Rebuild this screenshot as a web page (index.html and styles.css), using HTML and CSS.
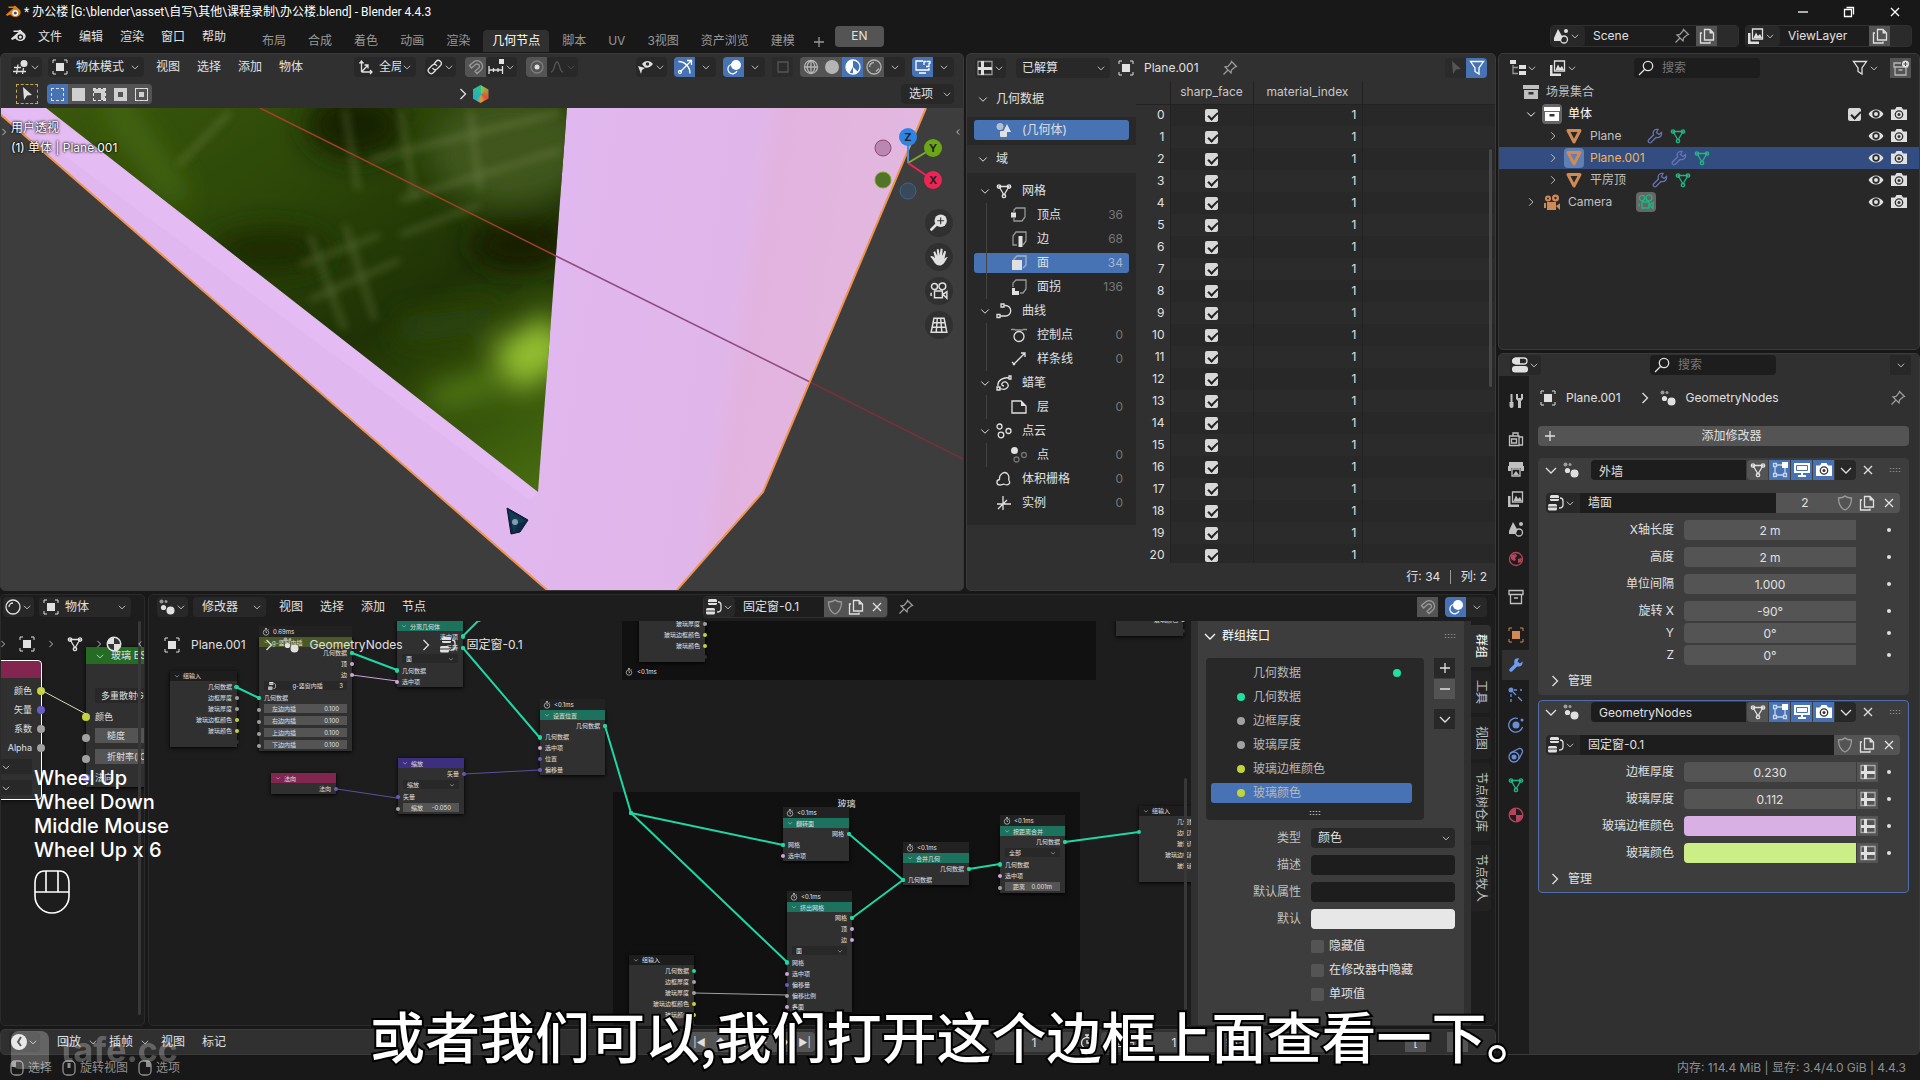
FILE: index.html
```
<!DOCTYPE html>
<html lang="zh-CN">
<head>
  <link rel="icon" href="data:,">
  <meta charset="UTF-8">
  <meta name="viewport" content="width=device-width, initial-scale=1.0">
  <title>办公楼.blend - Blender 4.4.3</title>
  <link rel="stylesheet" href="styles.css">
</head>
<body>
  <!-- icon sprite -->
  <svg class="sprite" aria-hidden="true">
    <defs>
      <g id="tri"><path d="M3 3.5h10L8 12z"/><circle cx="3" cy="3.5" r="1.7"/><circle cx="13" cy="3.5" r="1.7"/><circle cx="8" cy="13" r="1.7"/></g>
    </defs>
    <symbol id="down" viewBox="0 0 16 16"><path class="ln" d="M3 6l5 5 5-5"/></symbol>
    <symbol id="right" viewBox="0 0 16 16"><path class="ln" d="M5.500 3l5 5-5 5"/></symbol>
    <symbol id="left" viewBox="0 0 16 16"><path class="ln" d="M10 4L6 8l4 4"/></symbol>
    <symbol id="plus" viewBox="0 0 16 16"><path class="ln" d="M8 3v10M3 8h10"/></symbol>
    <symbol id="minus" viewBox="0 0 16 16"><path class="ln" d="M3 8h10"/></symbol>
    <symbol id="close" viewBox="0 0 16 16"><path class="ln" d="M4 4l8 8M12 4l-8 8"/></symbol>
    <symbol id="restore" viewBox="0 0 16 16"><path class="ln" d="M3.500 5.500h7v7h-7zM5.500 3.500h7v7"/></symbol>
    <symbol id="logo" viewBox="0 0 16 16"><path d="M1 10.500L8.500 4H3.500V2.500h5L10 1.500l5 4.500a5 4.500 0 1 1-9.500 4.500L2 12z"/><circle cx="10.300" cy="9" r="2.800" fill="#181818"/><circle cx="10.300" cy="9" r="1.500"/></symbol>
    <symbol id="applogo" viewBox="0 0 16 16"><path fill="#e87d0d" d="M1 10.500L8.500 4H3.500V2.500h5L10 1.500l5 4.500a5 4.500 0 1 1-9.500 4.500L2 12z"/><circle cx="10.300" cy="9" r="3" fill="#fff"/><circle cx="10.300" cy="9" r="1.600" fill="#265787"/></symbol>
    <symbol id="view3d" viewBox="0 0 16 16"><circle cx="11" cy="4.500" r="3.500"/><path class="ln" d="M1 8.500h7M0 12.500h13M5 5.500L3.500 15M10.500 9l-1 6"/></symbol>
    <symbol id="object" viewBox="0 0 16 16"><rect x="4" y="4" width="8" height="8"/><path class="ln thin" d="M1 4V1h3M12 1h3v3M15 12v3h-3M4 15H1v-3"/></symbol>
    <symbol id="orient" viewBox="0 0 16 16"><path class="ln" d="M3.500 13V3M1.500 4.500l2-2.500 2 2.500M3.500 13H14M12 11l2 2-2 2M3.500 13L10 6M6.500 6H10v3.500"/></symbol>
    <symbol id="pivot" viewBox="0 0 16 16"><path class="ln" d="M7 5l2-2.500a3 3 0 0 1 4.500 4L10 10a3 3 0 0 1-4.500-1M9 11l-2.500 2.500a3 3 0 0 1-4.500-4L5.500 6A3 3 0 0 1 10 7"/></symbol>
    <symbol id="magnet" viewBox="0 0 16 16"><path class="ln" d="M1.500 6.500L5 3.500a5.500 5.500 0 1 1 7.500 8L9 14.500 7 12.300l3.700-3.200a2.300 2.300 0 0 0-3.200-3.500L3.500 9z"/></symbol>
    <symbol id="increment" viewBox="0 0 16 16"><path class="ln" d="M1 7v8M5.500 9v4M10 9v4M14.500 7v8M1 11h14"/><rect x="11" y="0" width="5" height="5"/></symbol>
    <symbol id="prop" viewBox="0 0 16 16"><circle class="ln" cx="8" cy="8" r="6" opacity=".3"/><circle cx="8" cy="8" r="2.500"/></symbol>
    <symbol id="falloff" viewBox="0 0 16 16"><path class="ln" d="M2 13c4 0 3-10 6-10s2 10 6 10"/></symbol>
    <symbol id="select-eye" viewBox="0 0 16 16"><path d="M4 5c3-4 8-4 11 0-3 4-6 4-8 3.500zM0 7l7 2-3 2-1 4z"/><circle cx="9.500" cy="5" r="1.800" fill="#303030"/></symbol>
    <symbol id="gizmo" viewBox="0 0 16 16"><path class="ln" d="M1.500 2.500C8 2.500 13 8 13 14.500M3 13L14 2M10 1.500h4.500V6"/><circle class="ln" cx="3" cy="13" r="1.500"/></symbol>
    <symbol id="overlay" viewBox="0 0 16 16"><circle cx="10" cy="6" r="5"/><path class="ln" d="M5 5.500a4.800 4.800 0 1 0 6 6.500"/></symbol>
    <symbol id="xray" viewBox="0 0 16 16"><path class="ln" d="M3 3h10v10H3z"/></symbol>
    <symbol id="wire" viewBox="0 0 16 16"><circle class="ln" cx="8" cy="8" r="6.500"/><path class="ln" d="M1.500 8h13M8 1.500v13M8 1.500c-5 3-5 10 0 13M8 1.500c5 3 5 10 0 13"/></symbol>
    <symbol id="solid" viewBox="0 0 16 16"><circle cx="8" cy="8" r="7"/></symbol>
    <symbol id="matprev" viewBox="0 0 16 16"><circle class="ln" cx="8" cy="8" r="7"/><path d="M8 8V1A7 7 0 0 0 1 8a7 7 0 0 0 3.500 6zM8 8l5 5a7 7 0 0 1-5 2z"/></symbol>
    <symbol id="rendered" viewBox="0 0 16 16"><circle class="ln" cx="8" cy="8" r="7"/><path class="ln" d="M3.500 8A5 5 0 0 1 8 3.500M10 12.500l3-3"/></symbol>
    <symbol id="screenlink" viewBox="0 0 16 16"><path class="ln" d="M8 2H1v9h13V9M4 14h7M9 6V2.500h2.500M14 4v3.500h-3M12 2.500h3V5"/></symbol>
    <symbol id="sheet" viewBox="0 0 16 16"><path class="ln" d="M1 1.500h14v13H1z" opacity=".6"/><path d="M4 1h3v14H4zM1 7h14v3H1z"/></symbol>
    <symbol id="pin" viewBox="0 0 16 16"><path class="ln" d="M9.500 1.500l5 5-1.500.5-3.500 3-.5 3L3 7l3-.5 3-3.500zM6 10l-4.500 4.500"/></symbol>
    <symbol id="arrow" viewBox="0 0 16 16"><path d="M4 1l9 8-5 .5L5 14z"/></symbol>
    <symbol id="funnel" viewBox="0 0 16 16"><path class="ln" d="M1.500 1.500h13L10 8v6l-4-2.500V8z"/></symbol>
    <symbol id="geo" viewBox="0 0 16 16"><path d="M11 2l4 8H7z"/><rect x="4" y="9" width="7" height="6" rx="1"/><circle cx="4" cy="4.500" r="3.500" opacity=".7"/></symbol>
    <symbol id="mesh" viewBox="0 0 16 16"><use href="#tri" class="ln"/></symbol>
    <symbol id="vertex" viewBox="0 0 16 16"><path class="ln" d="M3 5V3l2-2h9v9l-3 4H3v-3" opacity=".6"/><rect x="0" y="5.500" width="5" height="5"/></symbol>
    <symbol id="edge" viewBox="0 0 16 16"><path class="ln" d="M6 14H2V5l3-4h10v9l-3 4" opacity=".6"/><rect x="7.500" y="5" width="4" height="11"/></symbol>
    <symbol id="face" viewBox="0 0 16 16"><path class="ln" d="M3 5V4l3-3h9v9l-3 3" opacity=".6"/><rect x="1" y="5" width="10" height="10"/></symbol>
    <symbol id="corner" viewBox="0 0 16 16"><path class="ln" d="M2 8V4l3-3h10v9l-3 4H9" opacity=".6"/><path d="M1 9h3v3h4v4H1z"/></symbol>
    <symbol id="curve" viewBox="0 0 16 16"><path class="ln" d="M8 2.500h1.500a5 5 0 0 1 0 10.500H4M5 1h3v3H5zM1 11.500h3v3H1z"/></symbol>
    <symbol id="control" viewBox="0 0 16 16"><circle class="ln" cx="8" cy="9.500" r="5"/><path class="ln" d="M0 2.500h4M12 2.500h4M4 3h8" opacity=".6"/></symbol>
    <symbol id="spline" viewBox="0 0 16 16"><path class="ln" d="M2 14L14 2M10 2h4v4M1 11l3 3"/></symbol>
    <symbol id="gpencil" viewBox="0 0 16 16"><path class="ln" d="M2 11c-1-6 6-9 11-8M3 13c8 4 12-3 7-6-4-1-6 4-2 4M13 1h2v3h-2zM1 12h3v3H1z"/></symbol>
    <symbol id="layer" viewBox="0 0 16 16"><path class="ln" d="M1 2h9l5 5v7H1z"/><path d="M10 2l5 5h-5z"/></symbol>
    <symbol id="cloud" viewBox="0 0 16 16"><circle class="ln" cx="3.500" cy="3.500" r="2.500"/><circle class="ln" cx="5" cy="12" r="2.800"/><circle class="ln" cx="12.500" cy="8" r="2.500"/></symbol>
    <symbol id="point" viewBox="0 0 16 16"><circle cx="3.500" cy="3.500" r="3.500"/><g opacity=".4"><circle class="ln" cx="5.500" cy="12.500" r="2.500"/><circle class="ln" cx="13" cy="8" r="2.500"/></g></symbol>
    <symbol id="volume" viewBox="0 0 16 16"><path class="ln" d="M4 14C0 14 0 9 3.500 8.500 3 3 9-1 12 3.500c2 3 0 4 1 6 2 3-1 5-4 4-2-1-3 .5-5 .5z"/></symbol>
    <symbol id="instance" viewBox="0 0 16 16"><path class="ln" d="M7 1v14M1 9h14M2 14l9-9"/></symbol>
    <symbol id="outliner" viewBox="0 0 16 16"><rect x="0" y="0" width="6" height="4"/><rect x="9" y="5" width="7" height="4"/><rect x="9" y="11" width="7" height="4"/><path class="ln" d="M3 5v8.500h5M3 7.500h5" opacity=".6"/></symbol>
    <symbol id="image" viewBox="0 0 16 16"><path class="ln" d="M4.500 1h10v10h-10z"/><path d="M5.500 10L8 4.500 10 8l2-2 2 4zM0 5h2.500v8.500H11V16H0z"/></symbol>
    <symbol id="search" viewBox="0 0 16 16"><circle class="ln" cx="10" cy="6" r="4.700"/><path class="ln" d="M6.500 9.500L1 15"/></symbol>
    <symbol id="newcol" viewBox="0 0 16 16"><path class="ln" d="M8 3H1v4h14M2 7v8h11V8M5.500 10h4" opacity=".7"/><circle cx="12.500" cy="4" r="3.500"/><path d="M12.500 2v4M10.500 4h4" stroke="#545454"/></symbol>
    <symbol id="collection" viewBox="0 0 16 16"><path d="M0 1h16v4H0zM1 6h14v9H1z"/><path d="M5.500 8h5v2.500h-5z" fill="#333"/></symbol>
    <symbol id="archive" viewBox="0 0 16 16"><path class="ln" d="M1 1.500h14v4H1zM2.500 5.500h11v9h-11zM6 9h4"/></symbol>
    <symbol id="tri-obj" viewBox="0 0 16 16"><path d="M2 2.500h12L8 14z" fill="none" stroke="currentColor" stroke-width="3" stroke-linejoin="round"/></symbol>
    <symbol id="wrench" viewBox="0 0 16 16"><path class="ln" d="M14.500 4.500L12 6.500l-2.500-2 1.500-3C7 .5 5.500 4 6.500 7L1.500 12c-1 2 1 3.500 2.500 2.500L9 9.500c4 .5 6-1.500 5.500-5z"/></symbol>
    <symbol id="wrench-fill" viewBox="0 0 16 16"><path d="M14.500 4.500L12 6.500l-2.500-2 1.500-3C7 .5 5.500 4 6.500 7L1.500 12c-1 2 1 3.500 2.500 2.500L9 9.500c4 .5 6-1.500 5.500-5z"/></symbol>
    <symbol id="eye" viewBox="0 0 16 16"><path d="M.5 8C4 2 12 2 15.500 8 12 14 4 14 .5 8z"/><circle cx="8" cy="8" r="3.700" fill="#282828"/><circle cx="8" cy="8" r="2"/></symbol>
    <symbol id="camera" viewBox="0 0 16 16"><path d="M0 3.500h4L5.500 1h5L12 3.500h4V14H0z"/><circle cx="8" cy="8.500" r="3.700" fill="none" stroke="#333" stroke-width="1.300"/><circle cx="8" cy="8.500" r="1.500" fill="#333"/></symbol>
    <symbol id="movie" viewBox="0 0 16 16"><circle cx="4" cy="4" r="2.700" class="ln"/><circle cx="11" cy="3.800" r="3" class="ln"/><path class="ln" d="M4 8h7v6H4zM11.500 11l3.500-2.500v6zM1 9.500v3"/></symbol>
    <symbol id="movie-fill" viewBox="0 0 16 16"><circle cx="4" cy="4.500" r="3"/><circle cx="11.500" cy="4" r="3.500"/><path d="M3 8h9v8H3zM12 12l4-2.500V16zM0 9h2v5H0z"/><circle cx="11.500" cy="4" r="1.200" fill="#282828"/><circle cx="4" cy="4.500" r="1" fill="#282828"/></symbol>
    <symbol id="scene" viewBox="0 0 16 16"><path d="M5 1l4.500 8-2 4H1V10z"/><circle cx="13" cy="3" r="2"/><circle class="ln" cx="11" cy="11.500" r="3.500" fill="#222"/></symbol>
    <symbol id="copy" viewBox="0 0 16 16"><path class="ln" d="M5.500 1.500H11l3.500 3.500v7h-9zM3 5H1.500v10H11v-1.500"/><path d="M10.500 1.500v4h4z"/></symbol>
    <symbol id="shield" viewBox="0 0 16 16"><path class="ln" d="M1.500 3C4 3 6.500 2.500 8 1c1.500 1.500 4 2 6.500 2 0 6-2 10-6.500 12C3.500 13 1.500 9 1.500 3z"/></symbol>
    <symbol id="tree" viewBox="0 0 16 16"><rect x="2" y="0" width="9" height="6" rx="1.500"/><rect x="0" y="9" width="9" height="6.500" rx="1.500"/><path class="ln" d="M12 3c2 0 3 1 3 3v4c0 2-1 3-4 3"/><path d="M2 3.500h9M0 12h9" stroke="#333"/></symbol>
    <symbol id="dots" viewBox="0 0 16 16"><circle cx="11.500" cy="11.500" r="4"/><circle cx="4.500" cy="8.500" r="2.600"/><circle cx="2.500" cy="2.500" r="2" opacity=".6"/><circle cx="7" cy="2.500" r="1.500" opacity=".6"/></symbol>
    <symbol id="properties" viewBox="0 0 16 16"><rect x="1" y="1" width="14" height="6" rx="3" class="ln"/><path d="M3 1h5v6H3a3 3 0 0 1 0-6z"/><rect x="0" y="9" width="16" height="6.500" rx="3"/></symbol>
    <symbol id="tool" viewBox="0 0 16 16"><path d="M2.500 1h2v8h1v4a2 2 0 0 1-4 0V9h1zM8 1h2v4h3V1h2v5l-2 2v7h-3V8L8 6z"/></symbol>
    <symbol id="render" viewBox="0 0 16 16"><path class="ln" d="M1.500 5H11v9.500H1.500zM11 6h3.500v8H11M5 5V2h5v3M3.500 8h5v4h-5z"/></symbol>
    <symbol id="output" viewBox="0 0 16 16"><path d="M1 1h14v4H1zM0 5h16v5h-3V7H3v3H0z"/><path class="ln" d="M4 8h8v7H4z"/><path d="M5 14l3-4 3 4z"/></symbol>
    <symbol id="world" viewBox="0 0 16 16"><circle class="ln" cx="8" cy="8" r="6.500"/><path d="M3 4l5-1 1 2-2 2 1 2-2 1-3-2zM10 8l4-1-1 4-3 1zM12 3l3-2"/></symbol>
    <symbol id="particles" viewBox="0 0 16 16"><circle cx="3" cy="3" r="2.500"/><path class="ln" d="M6 3h3M12 3h2M5 5l3 3M10 10l4 4M3 7v3M3 12v3"/></symbol>
    <symbol id="physics" viewBox="0 0 16 16"><circle cx="8" cy="8" r="3.500"/><path class="ln" d="M10 1.500A7 7 0 1 0 14.500 10"/><circle cx="14" cy="3" r="1.500"/></symbol>
    <symbol id="constraint" viewBox="0 0 16 16"><circle class="ln" cx="6" cy="10" r="5"/><circle cx="6" cy="10" r="2.500"/><path class="ln" d="M2 6L11 1.500a3 3 0 0 1 3.500 3.500L11 12"/></symbol>
    <symbol id="material" viewBox="0 0 16 16"><circle class="ln" cx="8" cy="8" r="6.800"/><path d="M8 8V1.500A6.500 6.500 0 0 0 1.500 8zM8 8v6.500A6.500 6.500 0 0 0 14.500 8z"/></symbol>
    <symbol id="material-w" viewBox="0 0 16 16"><circle cx="8" cy="8" r="7.500"/><path d="M8 8V2a6 6 0 0 1 6 6zM8 8v6a6 6 0 0 1-6-6z" fill="#333"/></symbol>
    <symbol id="editmode" viewBox="0 0 16 16"><path class="ln" d="M3 5v6M5 13h6M13 6v5M5 3h5M1.500 1.500h3v3h-3zM1.500 11.500h3v3h-3zM11.500 11.500h3v3h-3z" opacity=".7"/><rect x="10" y="0" width="6" height="6"/></symbol>
    <symbol id="display" viewBox="0 0 16 16"><path d="M0 1h16v10H0zM4 13h8v2H4zM7 11h2v3H7z"/><path class="inner" d="M2.500 3.500h11v5h-11z"/></symbol>
    <symbol id="clock" viewBox="0 0 16 16"><circle cx="8" cy="8" r="8"/><path class="inner dark-line" d="M10 3L7 8l3 4"/></symbol>
    <symbol id="stopwatch" viewBox="0 0 16 16"><circle class="ln" cx="8" cy="9" r="5.500"/><path class="ln" d="M6 1h4M8 1v3M8 6v3h2M13 3l1 1"/></symbol>
    <symbol id="sphere" viewBox="0 0 16 16"><circle class="ln" cx="8" cy="8" r="7"/><path class="ln" d="M4 8a4 4 0 0 1 4-4"/></symbol>
    <symbol id="grip" viewBox="0 0 16 16"><path d="M1 6h2M5 6h2M9 6h2M13 6h2M1 10h2M5 10h2M9 10h2M13 10h2" stroke="currentColor" stroke-width="1.500"/></symbol>
    <symbol id="mouse-l" viewBox="0 0 16 16"><rect class="ln" x="2" y="1" width="12" height="14" rx="4"/><path d="M6 1h1v6H2V5a4 4 0 0 1 4-4z"/></symbol>
    <symbol id="mouse-m" viewBox="0 0 16 16"><rect class="ln" x="2" y="1" width="12" height="14" rx="4"/><path d="M6.500 3h3v5h-3z"/></symbol>
    <symbol id="mouse-r" viewBox="0 0 16 16"><rect class="ln" x="2" y="1" width="12" height="14" rx="4"/><path d="M9 1h1a4 4 0 0 1 4 4v2H9z"/></symbol>
    <symbol id="zoomin" viewBox="0 0 16 16"><circle cx="9.500" cy="6" r="5.500"/><path d="M6 9l-5.500 5.500" stroke="currentColor" stroke-width="2.500"/><path d="M9.500 3v6M6.500 6h6" stroke="#333"/></symbol>
    <symbol id="hand" viewBox="0 0 16 16"><path d="M4.500 9L3 3.500l1.500-.7L6.500 7 6 1h1.800l.7 5.500L9.500.5l1.700.3L10.800 7l2-4.500 1.500.6-1.500 6.500c1-1 2-2 3-1.600-2 3-3.300 7-6.500 7.500-4 .5-5.300-2.500-6.800-5L.3 7.500C1.500 6.500 3 7.500 4.500 9z"/></symbol>
    <symbol id="grid" viewBox="0 0 16 16"><path class="ln" d="M3.500 2h9L15 14.500H1zM2.500 6h11M2 10h12M6.500 2L5.500 14.500M9.500 2l1 12.500"/></symbol>
  </svg>

  <header class="titlebar">
    <svg class="icon"><use href="#applogo"/></svg>
    <span class="title-text">* 办公楼 [G:\blender\asset\自写\其他\课程录制\办公楼.blend] - Blender 4.4.3</span>
    <div class="window-buttons">
      <button aria-label="最小化"><svg class="icon"><use href="#minus"/></svg></button>
      <button aria-label="还原"><svg class="icon"><use href="#restore"/></svg></button>
      <button aria-label="关闭"><svg class="icon"><use href="#close"/></svg></button>
    </div>
  </header>

  <div class="topbar">
    <button class="logo-btn" aria-label="Blender"><svg class="icon"><use href="#logo"/></svg></button>
    <nav class="menus">
      <button>文件</button><button>编辑</button><button>渲染</button><button>窗口</button><button>帮助</button>
    </nav>
    <nav class="tabs">
      <button>布局</button><button>合成</button><button>着色</button><button>动画</button><button>渲染</button><button class="active">几何节点</button><button>脚本</button><button>UV</button><button>3视图</button><button>资产浏览</button><button>建模</button>
      <button class="add-tab" aria-label="添加工作区"><svg class="icon"><use href="#plus"/></svg></button>
    </nav>
    <button class="lang">EN</button>
    <div class="id-block scene-block">
      <button class="drop" aria-label="浏览场景"><svg class="icon"><use href="#scene"/></svg><svg class="chev"><use href="#down"/></svg></button>
      <input type="text" value="Scene" aria-label="场景">
      <svg class="icon dim"><use href="#pin"/></svg>
      <button class="sq" aria-label="新建场景"><svg class="icon"><use href="#copy"/></svg></button>
      <button class="sq off" aria-label="删除场景"></button>
    </div>
    <div class="id-block layer-block">
      <button class="drop" aria-label="浏览视图层"><svg class="icon"><use href="#image"/></svg><svg class="chev"><use href="#down"/></svg></button>
      <input type="text" value="ViewLayer" aria-label="视图层">
      <button class="sq" aria-label="新建视图层"><svg class="icon"><use href="#copy"/></svg></button>
      <button class="sq off" aria-label="删除视图层"></button>
    </div>
  </div>

  <main class="workspace">
    <div class="left-side">
      <div class="top-areas">
        <!-- 3D viewport -->
        <section class="area viewport">
          <div class="header">
            <button class="drop" aria-label="编辑器类型"><svg class="icon"><use href="#view3d"/></svg><svg class="chev"><use href="#down"/></svg></button>
            <div class="select mode-select"><svg class="icon"><use href="#object"/></svg><select aria-label="模式"><option>物体模式</option></select><svg class="chev"><use href="#down"/></svg></div>
            <nav class="menus"><button>视图</button><button>选择</button><button>添加</button><button>物体</button></nav>
            <div class="cluster auto loose">
              <div class="select orient-select"><svg class="icon"><use href="#orient"/></svg><select aria-label="变换坐标系"><option>全局</option></select><svg class="chev"><use href="#down"/></svg></div>
              <button class="drop" aria-label="轴心点"><svg class="icon"><use href="#pivot"/></svg><svg class="chev"><use href="#down"/></svg></button>
              <div class="joined">
                <button class="sq" aria-label="吸附"><svg class="icon dim"><use href="#magnet"/></svg></button>
                <button class="drop" aria-label="吸附到"><svg class="icon"><use href="#increment"/></svg><svg class="chev"><use href="#down"/></svg></button>
              </div>
              <div class="joined">
                <button class="sq" aria-label="衰减编辑"><svg class="icon"><use href="#prop"/></svg></button>
                <button class="drop faint" aria-label="衰减类型"><svg class="icon"><use href="#falloff"/></svg><svg class="chev"><use href="#down"/></svg></button>
              </div>
            </div>
            <div class="cluster auto">
              <button class="drop" aria-label="可选性"><svg class="icon"><use href="#select-eye"/></svg><svg class="chev"><use href="#down"/></svg></button>
              <div class="joined">
                <button class="sq on" aria-label="Gizmo"><svg class="icon"><use href="#gizmo"/></svg></button>
                <button class="sq dark" aria-label="Gizmo 选项"><svg class="chev"><use href="#down"/></svg></button>
              </div>
              <div class="joined">
                <button class="sq on" aria-label="叠加层"><svg class="icon"><use href="#overlay"/></svg></button>
                <button class="sq dark" aria-label="叠加层选项"><svg class="chev"><use href="#down"/></svg></button>
              </div>
              <button class="sq off faint" aria-label="透视模式"><svg class="icon"><use href="#xray"/></svg></button>
              <div class="joined">
                <button class="sq" aria-label="线框"><svg class="icon light"><use href="#wire"/></svg></button>
                <button class="sq" aria-label="实体"><svg class="icon light"><use href="#solid"/></svg></button>
                <button class="sq on" aria-label="材质预览"><svg class="icon"><use href="#matprev"/></svg></button>
                <button class="sq" aria-label="渲染"><svg class="icon light"><use href="#rendered"/></svg></button>
                <button class="sq dark" aria-label="着色选项"><svg class="chev"><use href="#down"/></svg></button>
              </div>
              <div class="joined">
                <button class="sq on" aria-label="屏幕"><svg class="icon"><use href="#screenlink"/></svg></button>
                <button class="sq dark" aria-label="屏幕选项"><svg class="chev"><use href="#down"/></svg></button>
              </div>
            </div>
          </div>
          <div class="header tool-header">
            <div class="tool-left">
              <button class="tool-btn" aria-label="选择工具"><svg class="icon"><use href="#arrow"/></svg></button>
              <div class="joined">
                <button class="sq on" aria-label="设置"><i class="sel-box"></i></button>
                <button class="sq" aria-label="扩展"><i class="sel-box extend"></i></button>
                <button class="sq" aria-label="减去"><i class="sel-box subtract"></i></button>
                <button class="sq" aria-label="反转"><i class="sel-box invert"></i></button>
                <button class="sq" aria-label="相交"><i class="sel-box intersect"></i></button>
              </div>
            </div>
            <svg class="icon"><use href="#right"/></svg><i class="hexagon"></i>
            <div class="tool-right"><button class="options">选项 <svg class="chev"><use href="#down"/></svg></button></div>
          </div>
          <div class="scene3d">
            <svg class="scene-svg" viewBox="1 108 962 482" preserveAspectRatio="xMidYMid slice">
              <defs>
                <linearGradient id="wall" gradientUnits="userSpaceOnUse" x1="560" y1="300" x2="880" y2="350">
                  <stop offset="0" stop-color="#e0b7ee"/><stop offset=".52" stop-color="#e0b6ea"/><stop offset=".6" stop-color="#e2b3df"/><stop offset="1" stop-color="#e2b8df"/>
                </linearGradient>
                <linearGradient id="leaf" x1="0" y1="0" x2="1" y2="1">
                  <stop offset="0" stop-color="#3c5a0c"/><stop offset=".35" stop-color="#2c4708"/><stop offset=".6" stop-color="#1f3205"/><stop offset="1" stop-color="#4f7812"/>
                </linearGradient>
                <clipPath id="pane"><path d="M46 108H567L538 492z"/></clipPath>
                <filter id="soft" x="-50%" y="-50%" width="200%" height="200%"><feGaussianBlur stdDeviation="14"/></filter>
                <filter id="soft2" x="-50%" y="-50%" width="200%" height="200%"><feGaussianBlur stdDeviation="4"/></filter>
              </defs>
              <rect x="0" y="100" width="970" height="500" fill="#3d3d3d"/>
              <path d="M0 100V114L547 590H677L763 492L929 100z" fill="url(#wall)"/>
              <path d="M0 108L46 108L538 492L530 500z" fill="#e4bcf3"/>
              <g clip-path="url(#pane)">
                <rect x="0" y="100" width="600" height="400" fill="url(#leaf)"/>
                <g filter="url(#soft)">
                  <ellipse cx="355" cy="125" rx="50" ry="35" fill="#142103"/>
                  <ellipse cx="270" cy="250" rx="60" ry="22" fill="#1a2a05"/>
                  <ellipse cx="520" cy="245" rx="50" ry="26" fill="#131f03"/>
                  <ellipse cx="510" cy="150" rx="80" ry="55" fill="#3f571b"/>
                  <path d="M505 372L560 335" stroke="#94c030" stroke-width="52"/>
                  <path d="M430 400L500 380" stroke="#577f18" stroke-width="22"/>
                  <path d="M400 330L490 320" stroke="#2c440a" stroke-width="26"/>
                  <path d="M110 100l70 100" stroke="#4c7016" stroke-width="18"/>
                </g>
                <g filter="url(#soft2)" stroke="#8a9a64" stroke-width="4" opacity=".45" fill="none">
                  <path d="M178 165L230 112M345 110L358 190M400 110L415 200M470 110L480 190M310 235L345 330M345 225L375 320M300 265L380 235M310 300L400 260M370 160L560 112M400 200L560 150M400 235L480 205"/>
                </g>
              </g>
              <path d="M260 108L556 256" stroke="#a3402c" stroke-width="1.500"/>
              <path d="M556 256L810 382" stroke="#8e4c82" stroke-width="1.500"/>
              <path d="M810 382L963 459" stroke="#7b2f3f" stroke-width="1.500"/>
              <path d="M0 114L547 590M677 590L763 492L926 108" fill="none" stroke="#ee9350" stroke-width="2"/>
              <path d="M507 508l4 26 9-2 8-12z" fill="#0c2a44" stroke="#0b1622"/>
              <path d="M508 510l18 11-8 3-4 9z" fill="#123a55"/><circle cx="515" cy="522" r="3" fill="#7fa0b0"/>
            </svg>
            <div class="view-info"><div>用户透视</div><div>(1) 单体 | Plane.001</div></div>
            <svg class="chev edge-left"><use href="#right"/></svg>
            <svg class="chev edge-right"><use href="#left"/></svg>
            <div class="nav">
              <svg class="axes" viewBox="0 0 80 80">
                <g stroke-width="2"><path d="M40 40V14" stroke="#4a90d0"/><path d="M40 40L65 25" stroke="#7bab35"/><path d="M40 40L65 57" stroke="#ee2455"/></g>
                <circle cx="15" cy="25" r="8" fill="#b987b2" stroke="#8b4a72"/><circle cx="15" cy="57" r="8" fill="#53732a" stroke="#78a724"/><circle cx="40" cy="68" r="8" fill="#38495c" stroke="#3d6287"/>
                <circle cx="40" cy="14" r="9" fill="#2f84e3"/><circle cx="65" cy="25" r="9" fill="#6ba617"/><circle cx="65" cy="57" r="9" fill="#ee2455"/>
                <text x="40" y="18">Z</text><text x="65" y="29">Y</text><text x="65" y="61">X</text>
              </svg>
              <button aria-label="缩放"><svg class="icon"><use href="#zoomin"/></svg></button>
              <button aria-label="平移"><svg class="icon"><use href="#hand"/></svg></button>
              <button aria-label="相机"><svg class="icon"><use href="#movie"/></svg></button>
              <button aria-label="透视"><svg class="icon"><use href="#grid"/></svg></button>
            </div>
          </div>
        </section>

        <!-- spreadsheet -->
        <section class="area spreadsheet">
          <div class="header">
            <button class="drop" aria-label="编辑器类型"><svg class="icon"><use href="#sheet"/></svg><svg class="chev"><use href="#down"/></svg></button>
            <div class="select eval-select"><select aria-label="求值状态"><option>已解算</option></select><svg class="chev"><use href="#down"/></svg></div>
            <div class="path"><svg class="icon"><use href="#object"/></svg><span>Plane.001</span></div>
            <svg class="icon dim sheet-pin"><use href="#pin"/></svg>
            <div class="joined push">
              <button class="sq off faint" aria-label="仅选中项"><svg class="icon"><use href="#arrow"/></svg></button>
              <button class="sq on" aria-label="过滤"><svg class="icon"><use href="#funnel"/></svg></button>
            </div>
          </div>
          <div class="sheet-body">
            <aside class="domains">
              <h3><svg class="chev"><use href="#down"/></svg>几何数据</h3>
              <div class="data-box"><button class="row selected"><svg class="icon"><use href="#geo"/></svg>(几何体)</button></div>
              <h3 class="short"><svg class="chev"><use href="#down"/></svg>域</h3>
              <ul class="tree" id="domainTree"></ul>
            </aside>
            <div class="table-wrap">
              <table>
                <thead><tr><th class="idx"></th><th class="sharp">sharp_face</th><th class="mat">material_index</th><th></th></tr></thead>
                <tbody id="sheetRows"></tbody>
              </table>
              <i class="scrollbar"></i>
            </div>
          </div>
          <footer>行: 34 &nbsp;<i></i>&nbsp; 列: 2</footer>
        </section>
      </div>

      <div class="bottom-areas">
        <!-- shader editor -->
        <section class="area nodes shader">
          <div class="header">
            <button class="drop" aria-label="编辑器类型"><svg class="icon"><use href="#sphere"/></svg><svg class="chev"><use href="#down"/></svg></button>
            <div class="select shader-select"><svg class="icon"><use href="#object"/></svg><select aria-label="着色器类型"><option>物体</option></select><svg class="chev"><use href="#down"/></svg></div>
          </div>
          <div class="canvas big" id="shaderCanvas">
            <div class="crumbs tight"><svg class="chev"><use href="#right"/></svg><svg class="icon"><use href="#object"/></svg><svg class="chev"><use href="#right"/></svg><svg class="icon"><use href="#mesh"/></svg><svg class="chev"><use href="#right"/></svg><svg class="icon last"><use href="#material-w"/></svg><svg class="chev"><use href="#left"/></svg></div>
          </div>
        </section>

        <!-- geometry nodes -->
        <section class="area nodes geometry">
          <div class="header">
            <button class="drop" aria-label="编辑器类型"><svg class="icon"><use href="#dots"/></svg><svg class="chev"><use href="#down"/></svg></button>
            <div class="select type-select"><select aria-label="节点树类型"><option>修改器</option></select><svg class="chev"><use href="#down"/></svg></div>
            <nav class="menus"><button>视图</button><button>选择</button><button>添加</button><button>节点</button></nav>
            <div class="id-block tree-block">
              <button class="drop" aria-label="浏览节点树"><svg class="icon"><use href="#tree"/></svg><svg class="chev"><use href="#down"/></svg></button>
              <input type="text" value="固定窗-0.1" aria-label="节点树">
              <button class="sq" aria-label="伪用户"><svg class="icon dim"><use href="#shield"/></svg></button>
              <button class="sq" aria-label="复制"><svg class="icon"><use href="#copy"/></svg></button>
              <button class="sq" aria-label="断开"><svg class="icon"><use href="#close"/></svg></button>
            </div>
            <svg class="icon dim tree-pin"><use href="#pin"/></svg>
            <div class="cluster push">
              <button class="sq" aria-label="吸附"><svg class="icon dim"><use href="#magnet"/></svg></button>
              <div class="joined"><button class="sq on" aria-label="叠加层"><svg class="icon"><use href="#overlay"/></svg></button><button class="sq dark" aria-label="叠加层选项"><svg class="chev"><use href="#down"/></svg></button></div>
            </div>
          </div>
          <div class="node-body">
            <div class="canvas" id="geoCanvas">
              <div class="crumbs"><svg class="icon"><use href="#object"/></svg><span>Plane.001</span><svg class="icon sep"><use href="#right"/></svg><svg class="icon"><use href="#dots"/></svg><span>GeometryNodes</span><svg class="icon sep"><use href="#right"/></svg><svg class="icon"><use href="#tree"/></svg><span>固定窗-0.1</span></div>
            </div>
            <aside class="sidebar">
              <div class="group-panel">
                <h3><svg class="icon"><use href="#down"/></svg>群组接口<svg class="icon grip"><use href="#grip"/></svg></h3>
                <div class="socket-list">
                  <ul>
                    <li><i></i>几何数据<i class="dot green out"></i></li>
                    <li><i class="dot green"></i>几何数据</li>
                    <li><i class="dot gray"></i>边框厚度</li>
                    <li><i class="dot gray"></i>玻璃厚度</li>
                    <li><i class="dot yellow"></i>玻璃边框颜色</li>
                    <li class="selected"><i class="dot yellow"></i>玻璃颜色</li>
                    <li class="resize"><svg class="icon"><use href="#grip"/></svg></li>
                  </ul>
                  <div class="list-buttons">
                    <button class="sq dark" aria-label="添加"><svg class="icon"><use href="#plus"/></svg></button>
                    <button class="sq" aria-label="移除"><svg class="icon"><use href="#minus"/></svg></button>
                    <button class="sq dark more" aria-label="更多"><svg class="icon"><use href="#down"/></svg></button>
                  </div>
                </div>
                <div class="form">
                  <label for="sockType">类型</label><div class="select"><select id="sockType"><option>颜色</option></select><svg class="chev"><use href="#down"/></svg></div>
                  <label for="sockDesc">描述</label><input type="text" id="sockDesc">
                  <label for="sockAttr">默认属性</label><input type="text" id="sockAttr">
                  <label for="sockDefault">默认</label><button id="sockDefault" class="swatch white"></button>
                </div>
                <div class="checks">
                  <label><input type="checkbox">隐藏值</label>
                  <label><input type="checkbox">在修改器中隐藏</label>
                  <label><input type="checkbox">单项值</label>
                </div>
              </div>
              <nav class="side-tabs"><button class="active">群组</button><button>工具</button><button>视图</button><button>节点树仓库</button><button>节点牧人</button></nav>
            </aside>
          </div>
        </section>
      </div>

      <!-- timeline -->
      <section class="area timeline">
        <button class="drop" aria-label="编辑器类型"><svg class="icon"><use href="#clock"/></svg><svg class="chev"><use href="#down"/></svg></button>
        <nav class="menus"><button>回放<svg class="chev"><use href="#down"/></svg></button><button>插帧<svg class="chev"><use href="#down"/></svg></button><button>视图</button><button>标记</button></nav>
        <div class="joined playback"><button class="sq">|◀</button><button class="sq">◆</button><button class="sq">◀</button><button class="sq">▶</button><button class="sq">◆</button><button class="sq">▶|</button></div>
        <div class="frames">
          <input type="text" value="1" aria-label="当前帧"><svg class="icon"><use href="#stopwatch"/></svg>
          <div class="joined"><label>起始<input type="text" value="1"></label><label>结束<input type="text" value="250"></label></div>
          <div class="brackets"><button class="sq">[</button><button class="sq">]</button></div>
        </div>
      </section>
    </div>

    <div class="right-side">
      <!-- outliner -->
      <section class="area outliner">
        <div class="header">
          <button class="drop" aria-label="编辑器类型"><svg class="icon"><use href="#outliner"/></svg><svg class="chev"><use href="#down"/></svg></button>
          <button class="drop" aria-label="显示模式"><svg class="icon"><use href="#image"/></svg><svg class="chev"><use href="#down"/></svg></button>
          <div class="search"><svg class="icon"><use href="#search"/></svg><input type="text" placeholder="搜索" aria-label="搜索"></div>
          <button class="drop" aria-label="过滤"><svg class="icon"><use href="#funnel"/></svg><svg class="chev"><use href="#down"/></svg></button>
          <button class="sq" aria-label="新建集合"><svg class="icon"><use href="#newcol"/></svg></button>
        </div>
        <ul class="objects">
          <li><span class="twist"></span><svg class="icon"><use href="#collection"/></svg><span class="name">场景集合</span></li>
          <li class="lvl1 bright"><svg class="icon twist"><use href="#down"/></svg><span class="boxed"><svg class="icon"><use href="#collection"/></svg></span><span class="name">单体</span><span class="toggles"><input type="checkbox" checked aria-label="启用"><svg class="icon"><use href="#eye"/></svg><svg class="icon"><use href="#camera"/></svg></span></li>
          <li class="lvl2"><svg class="icon twist"><use href="#right"/></svg><svg class="icon orange"><use href="#tri-obj"/></svg><span class="name">Plane</span><svg class="icon blue"><use href="#wrench"/></svg><svg class="icon green"><use href="#mesh"/></svg><span class="toggles"><svg class="icon"><use href="#eye"/></svg><svg class="icon"><use href="#camera"/></svg></span></li>
          <li class="lvl2 active"><svg class="icon twist"><use href="#right"/></svg><span class="boxed"><svg class="icon orange"><use href="#tri-obj"/></svg></span><span class="name">Plane.001</span><svg class="icon blue"><use href="#wrench"/></svg><svg class="icon green"><use href="#mesh"/></svg><span class="toggles"><svg class="icon"><use href="#eye"/></svg><svg class="icon"><use href="#camera"/></svg></span></li>
          <li class="lvl2"><svg class="icon twist"><use href="#right"/></svg><svg class="icon orange"><use href="#tri-obj"/></svg><span class="name">平房顶</span><svg class="icon blue"><use href="#wrench"/></svg><svg class="icon green"><use href="#mesh"/></svg><span class="toggles"><svg class="icon"><use href="#eye"/></svg><svg class="icon"><use href="#camera"/></svg></span></li>
          <li class="lvl1"><svg class="icon twist"><use href="#right"/></svg><svg class="icon orange"><use href="#movie-fill"/></svg><span class="name">Camera</span><span class="boxed"><svg class="icon green"><use href="#movie"/></svg></span><span class="toggles"><svg class="icon"><use href="#eye"/></svg><svg class="icon"><use href="#camera"/></svg></span></li>
        </ul>
      </section>

      <!-- properties -->
      <section class="area properties">
        <div class="header">
          <button class="drop" aria-label="编辑器类型"><svg class="icon"><use href="#properties"/></svg><svg class="chev"><use href="#down"/></svg></button>
          <div class="search"><svg class="icon"><use href="#search"/></svg><input type="text" placeholder="搜索" aria-label="搜索"></div>
          <button class="sq dark" aria-label="选项"><svg class="chev"><use href="#down"/></svg></button>
        </div>
        <div class="prop-body">
          <nav class="prop-tabs">
            <button aria-label="工具"><svg class="icon"><use href="#tool"/></svg></button>
            <button class="gap" aria-label="渲染"><svg class="icon"><use href="#render"/></svg></button>
            <button aria-label="输出"><svg class="icon"><use href="#output"/></svg></button>
            <button aria-label="视图层"><svg class="icon"><use href="#image"/></svg></button>
            <button aria-label="场景"><svg class="icon"><use href="#scene"/></svg></button>
            <button aria-label="世界"><svg class="icon red"><use href="#world"/></svg></button>
            <button class="gap" aria-label="集合"><svg class="icon"><use href="#archive"/></svg></button>
            <button class="gap" aria-label="物体"><svg class="icon orange"><use href="#object"/></svg></button>
            <button class="active" aria-label="修改器"><svg class="icon"><use href="#wrench-fill"/></svg></button>
            <button aria-label="粒子"><svg class="icon sky"><use href="#particles"/></svg></button>
            <button aria-label="物理"><svg class="icon sky"><use href="#physics"/></svg></button>
            <button aria-label="约束"><svg class="icon sky"><use href="#constraint"/></svg></button>
            <button aria-label="数据"><svg class="icon green"><use href="#mesh"/></svg></button>
            <button aria-label="材质"><svg class="icon red"><use href="#material"/></svg></button>
          </nav>
          <div class="prop-content">
            <div class="context"><svg class="icon"><use href="#object"/></svg><span>Plane.001</span><svg class="icon sep"><use href="#right"/></svg><svg class="icon"><use href="#dots"/></svg><span>GeometryNodes</span><svg class="icon dim push"><use href="#pin"/></svg></div>
            <button class="add-modifier"><svg class="icon"><use href="#plus"/></svg><span>添加修改器</span></button>

            <div class="modifier">
              <div class="mod-head">
                <svg class="icon"><use href="#down"/></svg><svg class="icon"><use href="#dots"/></svg>
                <input type="text" value="外墙" aria-label="修改器名称">
                <div class="joined"><button class="sq" aria-label="网格"><svg class="icon"><use href="#mesh"/></svg></button><button class="sq on" aria-label="编辑模式"><svg class="icon"><use href="#editmode"/></svg></button><button class="sq on" aria-label="实时"><svg class="icon"><use href="#display"/></svg></button><button class="sq on" aria-label="渲染"><svg class="icon"><use href="#camera"/></svg></button><button class="sq dark" aria-label="更多"><svg class="icon"><use href="#down"/></svg></button></div>
                <button class="plain" aria-label="移除"><svg class="icon"><use href="#close"/></svg></button><svg class="icon grip"><use href="#grip"/></svg>
              </div>
              <div class="mod-id">
                <button class="drop" aria-label="浏览节点组"><svg class="icon"><use href="#tree"/></svg><svg class="chev"><use href="#down"/></svg></button>
                <input type="text" value="墙面" aria-label="节点组">
                <button class="count">2</button>
                <button class="sq" aria-label="伪用户"><svg class="icon dim"><use href="#shield"/></svg></button><button class="sq" aria-label="复制"><svg class="icon"><use href="#copy"/></svg></button><button class="sq" aria-label="断开"><svg class="icon"><use href="#close"/></svg></button>
              </div>
              <div class="fields">
                <div class="field"><label for="f1">X轴长度</label><input id="f1" type="text" value="2 m"><i></i><b></b></div>
                <div class="field"><label for="f2">高度</label><input id="f2" type="text" value="2 m"><i></i><b></b></div>
                <div class="field"><label for="f3">单位间隔</label><input id="f3" type="text" value="1.000"><i></i><b></b></div>
                <div class="field"><label for="f4">旋转 X</label><input id="f4" type="text" value="-90°"><i></i><b></b></div>
                <div class="field stacked"><label for="f5">Y</label><input id="f5" type="text" value="0°"><i></i><b></b></div>
                <div class="field stacked"><label for="f6">Z</label><input id="f6" type="text" value="0°"><i></i><b></b></div>
              </div>
              <div class="manage"><svg class="icon"><use href="#right"/></svg>管理</div>
            </div>

            <div class="modifier current">
              <div class="mod-head">
                <svg class="icon"><use href="#down"/></svg><svg class="icon"><use href="#dots"/></svg>
                <input type="text" value="GeometryNodes" aria-label="修改器名称">
                <div class="joined"><button class="sq" aria-label="网格"><svg class="icon"><use href="#mesh"/></svg></button><button class="sq on" aria-label="编辑模式"><svg class="icon"><use href="#editmode"/></svg></button><button class="sq on" aria-label="实时"><svg class="icon"><use href="#display"/></svg></button><button class="sq on" aria-label="渲染"><svg class="icon"><use href="#camera"/></svg></button><button class="sq dark" aria-label="更多"><svg class="icon"><use href="#down"/></svg></button></div>
                <button class="plain" aria-label="移除"><svg class="icon"><use href="#close"/></svg></button><svg class="icon grip"><use href="#grip"/></svg>
              </div>
              <div class="mod-id">
                <button class="drop" aria-label="浏览节点组"><svg class="icon"><use href="#tree"/></svg><svg class="chev"><use href="#down"/></svg></button>
                <input type="text" value="固定窗-0.1" aria-label="节点组">
                <button class="sq" aria-label="伪用户"><svg class="icon dim"><use href="#shield"/></svg></button><button class="sq" aria-label="复制"><svg class="icon"><use href="#copy"/></svg></button><button class="sq" aria-label="断开"><svg class="icon"><use href="#close"/></svg></button>
              </div>
              <div class="fields">
                <div class="field"><label for="g1">边框厚度</label><input id="g1" type="text" value="0.230"><button class="sq" aria-label="属性"><svg class="icon"><use href="#sheet"/></svg></button><b></b></div>
                <div class="field"><label for="g2">玻璃厚度</label><input id="g2" type="text" value="0.112"><button class="sq" aria-label="属性"><svg class="icon"><use href="#sheet"/></svg></button><b></b></div>
                <div class="field"><label for="g3">玻璃边框颜色</label><button id="g3" class="swatch pink"></button><button class="sq" aria-label="属性"><svg class="icon"><use href="#sheet"/></svg></button><b></b></div>
                <div class="field"><label for="g4">玻璃颜色</label><button id="g4" class="swatch lime"></button><button class="sq" aria-label="属性"><svg class="icon"><use href="#sheet"/></svg></button><b></b></div>
              </div>
              <div class="manage"><svg class="icon"><use href="#right"/></svg>管理</div>
            </div>
          </div>
        </div>
      </section>
    </div>
  </main>

  <footer class="statusbar">
    <span><svg class="icon"><use href="#mouse-l"/></svg>选择</span>
    <span><svg class="icon"><use href="#mouse-m"/></svg>旋转视图</span>
    <span><svg class="icon"><use href="#mouse-r"/></svg>选项</span>
    <span class="stats">内存: 114.4 MiB | 显存: 3.4/4.0 GiB | 4.4.3</span>
  </footer>

  <!-- key press display -->
  <div class="screencast">
    <div>Wheel Up</div><div>Wheel Down</div><div>Middle Mouse</div><div>Wheel Up x 6</div>
    <svg viewBox="0 0 36 44"><path d="M1 14C1 5 5 1 11 1h14c6 0 10 4 10 13v12a17 17 0 0 1-34 0zM1 22h34M12 1v21M24 1v21"/></svg>
  </div>
  <div class="watermark"><i></i>tafe.cc</div>
  <div class="subtitle">或者我们可以,我们打开这个边框上面查看一下。</div>

  <script src="script.js"></script>
</body>
</html>
```
FILE: styles.css
```
* {
  box-sizing: border-box;
}

body {
  margin: 0;
  height: 100vh;
  display: grid;
  grid-template-rows: 24px 28px minmax(0, 1fr) 25px;
  background-color: #181818;
  color: #e0e0e0;
  font-family: 'Inter', 'Noto Sans CJK SC', sans-serif;
  font-size: 12px;
  line-height: 16px;
  overflow: hidden;
}

button, input, select {
  font: inherit;
  color: inherit;
  border: 0;
  padding: 0;
  margin: 0;
  background: none;
  outline: 0;
}

input, select {
  min-width: 0;
}

select {
  appearance: none;
}

ul, h3 {
  list-style: none;
  margin: 0;
  padding: 0;
  font-size: 12px;
  font-weight: normal;
}

/* icons */
.sprite {
  position: absolute;
  width: 0;
  height: 0;
}

.icon {
  width: 16px;
  height: 16px;
  flex: none;
  fill: currentColor;
}

.chev {
  width: 10px;
  height: 10px;
  flex: none;
}

.ln {
  fill: none;
  stroke: currentColor;
  stroke-width: 1.3px;
}

.thin {
  stroke-width: 1px;
}

.chev .ln {
  stroke-width: 2px;
}

.inner {
  fill: none;
  stroke: #4772b3;
}

.dark-line {
  stroke: #222;
  stroke-width: 2px;
}

.dim { color: #9a9a9a; }
.light { color: #b4b4b4; }
.faint { color: #555; }
.orange { color: #d08a55; }
.green { color: #1fb683; }
.blue { color: #6574b8; }
.sky { color: #6a8fd8; }
.red { color: #b8445c; }

/* window frame */
.titlebar {
  display: flex;
  align-items: center;
  padding: 0 17px 1px 5px;
  gap: 3px;
  color: #fff;
  font-family: 'Roboto', 'Noto Sans CJK SC', sans-serif;
}

.window-buttons {
  margin-left: auto;
  display: flex;
  gap: 30px;
}

.window-buttons button {
  display: flex;
  align-items: center;
}

.topbar {
  display: flex;
  align-items: center;
  padding-right: 8px;
}

.logo-btn {
  margin: 0 12px 4px 10px;
  height: 16px;
}

.menus {
  display: flex;
  gap: 17px;
}

.topbar .menus {
  padding-bottom: 3px;
}

.tabs {
  display: flex;
  margin-left: 27px;
  align-self: flex-end;
  gap: 4px;
  color: #989898;
}

.tabs button {
  padding: 0 9px;
  height: 22px;
}

.tabs .active {
  background-color: #303030;
  border-radius: 4px 4px 0 0;
  color: #fff;
}

.tabs .add-tab {
  padding: 4px 0 0 3px;
}

.lang {
  width: 49px;
  height: 21px;
  margin: 0 auto 4px 8px;
  border-radius: 4px;
  background-color: #545454;
}

.id-block {
  display: flex;
  align-items: center;
  height: 22px;
  border-radius: 4px;
  background-color: #1d1d1d;
  border: 1px solid #303030;
  overflow: hidden;
}

.id-block input {
  flex: 1;
  padding-left: 8px;
}

.topbar .id-block {
  margin-bottom: 4px;
}

.topbar .drop {
  width: 34px;
}

.scene-block {
  width: 189px;
  margin-right: 6px;
}

.layer-block {
  width: 167px;
}

.scene-block .dim {
  margin-right: 6px;
}

/* common widgets */
.drop, .select {
  display: flex;
  align-items: center;
  height: 20px;
  gap: 1px;
  padding: 0 2px;
  border-radius: 4px;
  background-color: #282828;
}

.select {
  padding: 0 4px;
}

.select select {
  flex: 1;
  padding-left: 7px;
}

.sq {
  width: 21px;
  height: 20px;
  flex: none;
  display: flex;
  align-items: center;
  justify-content: center;
  background-color: #545454;
}

.sq.on {
  background-color: #4772b3;
  color: #fff;
}

.sq.off {
  background-color: #2b2b2b;
}

.sq.dark {
  background-color: #282828;
}

.joined {
  display: flex;
  border-radius: 4px;
  overflow: hidden;
}

.push {
  margin-left: auto;
}

.cluster {
  display: flex;
  align-items: center;
  gap: 7px;
}

.cluster.loose {
  gap: 9px;
  padding-right: 7px;
}

.cluster.auto {
  margin-left: auto;
}

.search {
  display: flex;
  align-items: center;
  width: 126px;
  height: 20px;
  padding: 0 4px;
  gap: 8px;
  border-radius: 4px;
  background-color: #1d1d1d;
}

.search input {
  width: 80px;
}

.search input::placeholder {
  color: #777;
}

input[type=checkbox] {
  appearance: none;
  width: 13px;
  height: 13px;
  border-radius: 2px;
  background-color: #545454;
  display: inline-block;
  flex: none;
}

input[type=checkbox]:checked {
  background-color: #d8d8d8;
}

input[type=checkbox]:checked::before {
  content: '';
  display: block;
  width: 8px;
  height: 4px;
  margin: 3px 0 0 3px;
  border: solid #222;
  border-width: 0 0 2px 2px;
  rotate: -45deg;
}

/* areas */
.workspace {
  display: grid;
  grid-template-columns: minmax(0, 1fr) 422px;
  gap: 2px;
  padding-top: 1px;
  min-height: 0;
}

.left-side {
  display: grid;
  grid-template-rows: 538fr 432fr 26px;
  gap: 3px;
  min-height: 0;
}

.right-side {
  display: grid;
  grid-template-rows: 297fr 702fr;
  gap: 3px;
  min-height: 0;
}

.top-areas, .bottom-areas {
  display: grid;
  grid-template-columns: minmax(0, 1fr) 530px;
  gap: 2px;
  min-height: 0;
}

.bottom-areas {
  grid-template-columns: 145px minmax(0, 1fr);
  gap: 3px;
}

.area {
  display: flex;
  flex-direction: column;
  background-color: #303030;
  border: 1px solid #3a3a3a;
  border-radius: 5px;
  overflow: hidden;
  min-height: 0;
  min-width: 0;
}

.header {
  display: flex;
  align-items: center;
  height: 26px;
  flex: none;
  padding: 0 8px;
}

/* 3D viewport */
.viewport .header {
  padding: 0 9px 0 10px;
}

.mode-select {
  width: 96px;
  margin: 0 12px 0 6px;
}

.orient-select {
  width: 62px;
}

.orient-select select {
  padding-left: 4px;
}

.header.tool-header {
  height: 28px;
}

.tool-left, .tool-right {
  display: flex;
  flex: 1;
}

.tool-right {
  justify-content: flex-end;
}

.tool-btn {
  width: 22px;
  height: 20px;
  margin: 0 9px 0 5px;
  border: 1px dashed #c9a94a;
}

.tool-btn .icon {
  display: block;
  margin: auto;
}

.sel-box {
  width: 13px;
  height: 13px;
  border: 1px dashed #e0e0e0;
}

.extend {
  border: 0;
  background-color: #d0d0d0;
}

.subtract {
  box-shadow: inset -4px 4px #d0d0d0;
}

.invert {
  border: 4px solid #d0d0d0;
}

.intersect {
  box-shadow: inset 0 0 0 3px #545454;
  background-color: #d0d0d0;
}

.hexagon {
  width: 16px;
  height: 18px;
  margin: 0 22px 0 2px;
  clip-path: polygon(50% 0, 100% 25%, 100% 75%, 50% 100%, 0 75%, 0 25%);
  background: conic-gradient(#7fd04a, #e0503a 35%, #e09a3a 50%, #20b0c0 62%, #30c090);
}

.options {
  display: flex;
  align-items: center;
  gap: 9px;
  height: 20px;
  padding: 0 2px 0 8px;
  background-color: #282828;
  border-radius: 4px;
}

.scene3d {
  position: relative;
  flex: 1;
  min-height: 0;
}

.scene-svg {
  display: block;
  width: 100%;
  height: 100%;
}

.view-info {
  position: absolute;
  left: 10px;
  top: 10px;
  line-height: 20px;
  color: #fff;
  text-shadow: 0 0 3px #000, 0 0 2px #000;
}

.edge-left {
  position: absolute;
  left: -2px;
  top: 19px;
}

.edge-right {
  position: absolute;
  right: 0;
  top: 19px;
}

.nav {
  position: absolute;
  right: 10px;
  top: 15px;
  width: 85px;
  display: flex;
  flex-direction: column;
  align-items: flex-end;
  gap: 6px;
}

.axes {
  width: 80px;
  height: 80px;
  margin-right: 5px;
}

.axes text {
  font-size: 11px;
  font-weight: bold;
  text-anchor: middle;
  fill: #222;
}

.nav button {
  width: 28px;
  height: 28px;
  border-radius: 50%;
  background-color: #303030;
  display: flex;
  align-items: center;
  justify-content: center;
}

.nav .icon {
  width: 18px;
  height: 18px;
}

/* spreadsheet */
.spreadsheet .header, .outliner .header {
  height: 27px;
}

.eval-select {
  width: 94px;
  margin: 0 8px 0 10px;
}

.eval-select select {
  padding-left: 2px;
}

.path {
  display: flex;
  align-items: center;
  gap: 10px;
}

.sheet-pin {
  margin-left: 23px;
}

.sheet-body {
  display: flex;
  flex: 1;
  min-height: 0;
}

.domains {
  width: 169px;
  flex: none;
}

.domains h3 {
  display: flex;
  align-items: center;
  gap: 7px;
  height: 36px;
  padding-left: 10px;
}

.domains .chev {
  width: 12px;
  height: 12px;
}

.domains h3.short {
  height: 28px;
}

.data-box {
  height: 28px;
  padding: 3px 7px;
  background-color: #282828;
}

.row {
  display: flex;
  align-items: center;
  width: 100%;
  height: 20px;
  border-radius: 3px;
}

.data-box .row {
  padding-left: 22px;
  gap: 10px;
}

.row.selected {
  background-color: #4772b3;
}

.tree {
  padding: 6px 7px 10px;
  background-color: #282828;
}

.tree li {
  display: flex;
  align-items: center;
  height: 20px;
  margin: 2px 0;
  padding: 0 6px 0 5px;
  gap: 10px;
  border-radius: 3px;
}

.tree li + li {
  margin-top: 4px;
}

.tree .chev, .tree .no-chev {
  width: 12px;
  margin-right: -5px;
}

.tree .child {
  padding-left: 12px;
}

.tree .child::before {
  content: '';
  width: 1px;
  height: 24px;
  background-color: #444;
  margin-right: 14px;
}

.tree .selected {
  background-color: #4772b3;
}

.tree span {
  margin-left: auto;
  color: #777;
}

.tree .selected span {
  color: #a5b8d8;
}

.table-wrap {
  position: relative;
  flex: 1;
  overflow: hidden;
}

table {
  width: 100%;
  border-collapse: collapse;
  table-layout: fixed;
}

th, td {
  height: 22px;
  padding: 0;
  border-right: 1px solid #222;
  font-weight: normal;
}

th {
  height: 23px;
  color: #c8c8c8;
  border-bottom: 1px solid #222;
}

th:last-child, td:last-child {
  border-right: 0;
}

td {
  text-align: right;
  padding-right: 5px;
  background-color: #282828;
}

tr:nth-child(even) td {
  background-color: #2b2b2b;
}

tr td.idx {
  background-color: #303030;
}

.idx { width: 34px; }
.sharp { width: 83px; }
.mat { width: 109px; }

td.check {
  padding: 0;
  text-align: center;
  line-height: 0;
}

.scrollbar {
  position: absolute;
  right: 3px;
  top: 68px;
  width: 3px;
  height: 238px;
  background-color: #484848;
  border-radius: 2px;
}

.spreadsheet footer {
  height: 27px;
  display: flex;
  align-items: center;
  justify-content: flex-end;
  padding-right: 8px;
}

.spreadsheet footer i {
  width: 1px;
  height: 14px;
  background-color: #999;
  margin: 0 3px;
}

/* node editors */
.nodes {
  background-color: #1d1d1d;
  border-color: #2b2b2b;
}

.nodes .header {
  padding-bottom: 2px;
}

.shader .header {
  padding: 0 2px 2px;
}

.shader-select {
  width: 92px;
  margin-left: 5px;
}

.shader-select select {
  padding-left: 5px;
}

.type-select {
  width: 73px;
  margin: 0 13px 0 5px;
}

.type-select select {
  padding-left: 5px;
}

.tree-block {
  width: 185px;
  margin-left: 277px;
}

.tree-pin {
  margin-left: 10px;
}

.node-body {
  display: flex;
  flex: 1;
  min-height: 0;
}

.canvas {
  position: relative;
  flex: 1;
  overflow: hidden;
  font-size: 6px;
  line-height: 11px;
}

/* vertical scroll handle */
.canvas::after {
  content: '';
  position: absolute;
  right: 4px;
  top: 157px;
  bottom: 15px;
  width: 3px;
  border-radius: 2px;
  background-color: #383838;
}

.canvas.big::after {
  right: 3px;
  top: 0;
  bottom: 10px;
}

.canvas .wires {
  position: absolute;
  left: 0;
  top: 0;
}

.crumbs {
  position: absolute;
  z-index: 2;
  left: 15px;
  top: 15px;
  display: flex;
  align-items: center;
  gap: 11px;
  font-size: 12px;
  line-height: 18px;
  white-space: nowrap;
}

.crumbs .sep {
  margin: 0 -5px 0 4px;
}

.crumbs.tight {
  left: -3px;
  width: 144px;
}

.crumbs .last {
  margin: 0 2px 0 -9px;
}

.frame {
  position: absolute;
  background-color: #111;
  font-size: 9px;
  line-height: 23px;
  text-align: center;
}

.frame .foot {
  position: absolute;
  left: 3px;
  bottom: 0;
  display: flex;
  align-items: center;
  gap: 4px;
  font-size: 6px;
  line-height: 16px;
}

.foot .icon, .time .icon, .bar .icon {
  width: 8px;
  height: 8px;
}

.node {
  position: absolute;
  background-color: #303030;
  box-shadow: 0 1px 4px #000;
  white-space: nowrap;
}

.node .time {
  position: absolute;
  left: 0;
  right: 0;
  top: -11px;
  height: 11px;
  padding-left: 3px;
  display: flex;
  align-items: center;
  gap: 3px;
  background-color: #222;
}

.node .head {
  display: flex;
  align-items: center;
  gap: 3px;
  height: 10px;
  padding-left: 4px;
}

.head.teal { background-color: #1d725e; }
.head.olive { background-color: #4b5a24; }
.head.crimson { background-color: #83264f; }
.head.purple { background-color: #3c2f80; }
.head.plain { background-color: #1d1d1d; }
.head.shade { background-color: #246b24; }

.head.plain {
  width: auto;
  height: 10px;
}

.node .chev {
  width: 6px;
  height: 6px;
}

.node .line {
  position: relative;
  height: 11px;
  padding: 0 5px;
}

.node .out {
  text-align: right;
}

.node .line::before {
  position: absolute;
  left: -2px;
  top: 4px;
  width: 4px;
  height: 4px;
  border-radius: 50%;
  background-color: var(--dot);
}

.node .in::before, .node .out::before, .node .val::before {
  content: '';
}

.node .out::before {
  left: auto;
  right: -2px;
}

.node .line span {
  display: flex;
  align-items: center;
  justify-content: space-between;
  height: 9px;
  line-height: 9px;
  margin-top: 1px;
  padding: 0 8px;
  background-color: #545454;
}

.node .line em {
  font-style: normal;
}

.node .sel span, .node .bar span {
  background-color: #282828;
  padding: 0 4px;
}

.big {
  font-size: 9px;
}

.big .node .head {
  height: 20px;
  border-bottom: 3px solid #303030;
  padding-left: 9px;
  gap: 6px;
  font-size: 10px;
}

.big .chev, .big .node .chev {
  width: 10px;
  height: 10px;
}

.big .node .line {
  height: 19px;
  line-height: 19px;
  padding: 0 9px;
}

.big .node .line::before {
  top: 6px;
  left: -4px;
  width: 8px;
  height: 8px;
}

.big .node .out::before {
  left: auto;
  right: -4px;
}

.big .node .line span {
  height: 15px;
  line-height: 15px;
  margin-top: 2px;
  padding: 0 0 0 12px;
}

.big .node .bar span {
  padding-left: 6px;
}

.outlined {
  outline: 1px solid #fff;
  border-radius: 3px;
}

/* node sidebar */
.sidebar {
  width: 304px;
  flex: none;
  display: flex;
  gap: 7px;
  padding-left: 7px;
  background: linear-gradient(to right, #303030 280px, #1d1d1d 280px);
}

.group-panel {
  width: 266px;
  background-color: #3d3d3d;
  padding: 0 8px;
}

.group-panel h3 {
  display: flex;
  align-items: center;
  gap: 4px;
  height: 30px;
  margin-left: -4px;
  color: #fff;
}

.grip {
  width: 12px;
  color: #888;
  margin-left: auto;
}

.socket-list {
  display: flex;
  justify-content: space-between;
  padding: 7px 1px 0 0;
}

.socket-list ul {
  width: 218px;
  height: 162px;
  padding: 4px 12px 0 5px;
  border-radius: 4px;
  background-color: #282828;
  color: #b8b8b8;
}

.socket-list li {
  display: flex;
  align-items: center;
  height: 20px;
  margin: 1px 0 4px;
  padding: 0 11px 0 26px;
  gap: 8px;
  border-radius: 3px;
}

.socket-list li.selected {
  background-color: #4772b3;
}

.socket-list li.resize {
  justify-content: center;
  height: 12px;
  padding: 0 0 0 6px;
  margin: 0;
}

.resize .icon {
  width: 12px;
  height: 12px;
}

.socket-list li + li {
  margin-top: 4px;
}

.socket-list i {
  width: 8px;
  height: 8px;
  border-radius: 50%;
}

.dot.green { background-color: #20e0a0; }
.dot.gray { background-color: #a1a1a1; }
.dot.yellow { background-color: #c3d43a; }

.dot.out {
  margin-left: auto;
}

.list-buttons {
  display: flex;
  flex-direction: column;
  gap: 1px;
}

.list-buttons .more {
  margin-top: 9px;
}

.form {
  display: grid;
  grid-template-columns: 95px 1fr;
  gap: 7px 10px;
  padding: 8px 1px 0 0;
  align-items: center;
}

.form label {
  text-align: right;
  color: #c0c0c0;
}

.form .select select {
  padding-left: 3px;
}

.form input {
  height: 20px;
  border-radius: 4px;
  background-color: #1d1d1d;
}

.swatch {
  height: 20px;
  border-radius: 4px;
}

.white { background-color: #e7e7e7; }

.checks {
  display: flex;
  flex-direction: column;
  gap: 8px;
  padding: 9px 0 0 105px;
}

.checks label {
  display: flex;
  align-items: center;
  gap: 5px;
}

.side-tabs {
  display: flex;
  flex-direction: column;
  align-items: flex-start;
  gap: 4px;
  padding-top: 4px;
}

.side-tabs button {
  writing-mode: vertical-rl;
  text-orientation: sideways;
  width: 20px;
  padding: 9px 0;
  color: #c0c0c0;
  background-color: #222;
  border-radius: 0 4px 4px 0;
}

.side-tabs .active {
  color: #fff;
  background-color: #303030;
}

/* timeline */
.timeline {
  flex-direction: row;
  align-items: center;
  padding: 0 27px 0 8px;
}

.timeline .menus {
  margin-left: 17px;
}

.timeline .menus button {
  display: flex;
  align-items: center;
  gap: 7px;
}

.timeline .menus .chev {
  margin-right: -6px;
}

.playback {
  margin: 0 180px 0 auto;
  font-size: 10px;
}

.frames {
  display: flex;
  align-items: center;
  gap: 6px;
}

.frames .joined {
  gap: 1px;
}

.frames label {
  display: flex;
  align-items: center;
  width: 114px;
  padding-left: 10px;
  background-color: #454545;
}

.frames input {
  width: 78px;
  height: 20px;
  text-align: center;
  background-color: #454545;
}

.brackets {
  display: flex;
  gap: 21px;
  margin-left: 69px;
}

/* outliner */
.outliner {
  background-color: #282828;
}

.outliner .header {
  gap: 9px;
  padding: 0 8px 0 9px;
}

.outliner .search {
  margin: 0 auto 0 46px;
}

.objects {
  color: #c0c0c0;
}

.objects li {
  display: flex;
  align-items: center;
  height: 22px;
  gap: 7px;
  padding: 0 12px 0 17px;
}

.objects .twist {
  width: 12px;
  margin-left: -12px;
}

.objects .lvl1 {
  padding-left: 38px;
}

.objects .lvl2 {
  padding-left: 60px;
}

.objects .lvl2 .name, .objects .lvl1 .name {
  margin: 0 19px 0 1px;
}

.objects .bright {
  color: #fff;
}

.objects .active {
  background-color: #334d80;
}

.objects .active .name {
  color: #f0b45a;
}

.boxed {
  display: flex;
  padding: 2px;
  margin: 0 -2px;
  border-radius: 4px;
  background-color: #666;
}

.active .boxed {
  background-color: #5f7fb5;
}

.toggles {
  margin-left: auto;
  display: flex;
  align-items: center;
  gap: 7px;
  color: #e0e0e0;
}

/* properties */
.properties .header {
  height: 22px;
  padding-left: 11px;
}

.properties .search {
  margin: 0 auto 0 109px;
}

.prop-body {
  display: flex;
  flex: 1;
  min-height: 0;
}

.prop-tabs {
  width: 30px;
  flex: none;
  padding: 10px 0 0 3px;
  background-color: #1d1d1d;
  color: #c0c0c0;
}

.prop-tabs button {
  display: flex;
  align-items: center;
  justify-content: center;
  width: 27px;
  height: 30px;
}

.prop-tabs .gap {
  margin-top: 8px;
}

.prop-tabs .active {
  background-color: #303030;
  color: #6f9cf0;
}

.prop-content {
  flex: 1;
  min-width: 0;
  padding: 0 10px 0 9px;
}

.context {
  display: flex;
  align-items: center;
  height: 43px;
  gap: 10px;
  padding: 0 3px 0 2px;
}

.context .sep {
  margin: 0 -3px 0 6px;
}

.add-modifier {
  display: flex;
  align-items: center;
  width: 100%;
  height: 20px;
  margin: 7px 0 12px;
  padding: 0 4px;
  border-radius: 4px;
  background-color: #545454;
}

.add-modifier span {
  flex: 1;
}

.modifier {
  margin-bottom: 5px;
  border: 1px solid #3d3d3d;
  border-radius: 4px;
  background-color: #3d3d3d;
}

.modifier.current {
  border-color: #4d6ea8;
}

.mod-head {
  display: flex;
  align-items: center;
  height: 20px;
  margin-top: 1px;
  padding-left: 4px;
  gap: 4px;
}

.mod-head input {
  flex: 1;
  height: 20px;
  margin: 0 -3px 0 8px;
  padding-left: 8px;
  border-radius: 4px 0 0 4px;
  background-color: #1d1d1d;
}

.mod-head .joined {
  gap: 1px;
}

.plain {
  width: 16px;
  height: 16px;
  line-height: 0;
}

.mod-head .grip {
  margin: 0 7px 0 9px;
}

.mod-id {
  display: flex;
  height: 20px;
  margin: 13px 8px 7px 7px;
  border-radius: 4px;
  overflow: hidden;
}

.mod-id .drop {
  width: 34px;
  border-radius: 0;
}

.mod-id input {
  flex: 1;
  padding-left: 8px;
  background-color: #1d1d1d;
}

.mod-id .sq {
  width: 22px;
}

.count {
  width: 58px;
  background-color: #545454;
}

.field {
  display: grid;
  grid-template-columns: 135px minmax(0, 1fr) 22px 22px;
  align-items: center;
  height: 20px;
  margin-bottom: 7px;
  padding-right: 8px;
}

.field label {
  text-align: right;
}

.field input, .field .swatch {
  margin-left: 10px;
  height: 20px;
  border-radius: 4px 0 0 4px;
  background-color: #545454;
  text-align: center;
}

.field .pink { background-color: #d8b0e3; }
.field .lime { background-color: #ccee86; }

.field .sq {
  margin-left: 1px;
}

.field.stacked {
  margin-top: -5px;
}

.field b {
  width: 4px;
  height: 4px;
  margin: auto;
  border-radius: 50%;
  background-color: #e0e0e0;
}

.manage {
  display: flex;
  align-items: center;
  gap: 5px;
  height: 26px;
  margin-top: -4px;
  padding-left: 8px;
}

/* status bar */
.statusbar {
  display: flex;
  align-items: center;
  gap: 9px;
  padding: 0 14px 0 9px;
  color: #8f8f8f;
}

.statusbar span {
  display: flex;
  align-items: center;
  gap: 3px;
}

.statusbar .stats {
  margin-left: auto;
}

/* things drawn above everything */
.screencast {
  position: absolute;
  left: 34px;
  bottom: 166px;
  font-size: 20px;
  line-height: 24px;
  font-weight: 500;
  color: #fff;
}

.screencast svg {
  display: block;
  width: 36px;
  height: 44px;
  margin-top: 8px;
  fill: none;
  stroke: #fff;
  stroke-width: 1.6px;
}

.watermark {
  position: absolute;
  left: 11px;
  bottom: 10px;
  display: flex;
  align-items: center;
  gap: 12px;
  font-size: 34px;
  line-height: 40px;
  font-weight: bold;
  color: #fff;
  opacity: 0.25;
}

.watermark i {
  width: 38px;
  height: 38px;
  border-radius: 8px;
  background-color: #fff;
}

.subtitle {
  position: absolute;
  left: 0;
  right: 0;
  bottom: 11px;
  padding-left: 370px;
  font-family: 'Noto Sans CJK SC', sans-serif;
  font-size: 55px;
  line-height: 70px;
  font-weight: 500;
  color: #fff;
  white-space: nowrap;
  -webkit-text-stroke: 4px #000;
  paint-order: stroke fill;
}
```
FILE: script.js
```
const svgNS = 'http://www.w3.org/2000/svg';
const icon = (name, cls = 'icon') => `<svg class="${cls}"><use href="#${name}"/></svg>`;

// spreadsheet rows
let rows = '';
for (let i = 0; i <= 20; i++) {
  rows += `<tr><td class="idx">${i}</td><td class="check"><input type="checkbox" checked aria-label="sharp_face ${i}"></td><td>1</td><td></td></tr>`;
}
document.getElementById('sheetRows').innerHTML = rows;

// domain tree: [icon, name, count, level]
const domains = [
  ['mesh', '网格', null, 0],
  ['vertex', '顶点', 36, 1],
  ['edge', '边', 68, 1],
  ['face', '面', 34, 1],
  ['corner', '面拐', 136, 1],
  ['curve', '曲线', null, 0],
  ['control', '控制点', 0, 1],
  ['spline', '样条线', 0, 1],
  ['gpencil', '蜡笔', null, 0],
  ['layer', '层', 0, 1],
  ['cloud', '点云', null, 0],
  ['point', '点', 0, 1],
  ['volume', '体积栅格', 0, 0],
  ['instance', '实例', 0, 0],
];
document.getElementById('domainTree').innerHTML = domains.map(([ic, name, count, level]) => {
  const cls = (level ? 'child' : '') + (name === '面' ? ' selected' : '');
  const lead = level ? '' : count === null ? icon('down', 'chev') : '<i class="no-chev"></i>';
  return `<li class="${cls}">${lead}${icon(ic)}${name}${count === null ? '' : `<span>${count}</span>`}</li>`;
}).join('');

const G = '#20d6a3', W = '#a1a1a1', Y = '#c3d43a', V = '#6a5cc8', P = '#cca6d6', K = '#303030';

// each row: [kind, text, socket colour or value]
const inputRows = [['out', '几何数据', G], ['out', '边框厚度', W], ['out', '玻璃厚度', W], ['out', '玻璃边框颜色', Y], ['out', '玻璃颜色', Y], ['out', '', K]];

const geo = {
  x: 149, y: 621,
  frames: [
    { x: 622, y: 600, w: 474, h: 80, title: '', time: '<0.1ms' },
    { x: 613, y: 792, w: 467, h: 240, title: '玻璃' },
  ],
  nodes: [
    { x: 170, y: 671, w: 67, head: 'plain', title: '组输入', rows: inputRows },
    { x: 259, y: 637, w: 93, head: 'olive', title: 'g-竖窗内插', time: '0.69ms', rows: [['out', '几何数据', G], ['out', '顶', P], ['out', '边', P], ['bar', 'g-竖窗内插', '3'], ['in', '几何数据', G], ['val', '左边内插', '0.100'], ['val', '右边内插', '0.100'], ['val', '上边内插', '0.100'], ['val', '下边内插', '0.100']] },
    { x: 271, y: 773, w: 65, head: 'crimson', title: '法向', rows: [['out', '法向', V]] },
    { x: 397, y: 621, w: 66, head: 'teal', title: '分离几何体', rows: [['out', '选中项', G], ['out', '反转', G], ['sel', '面', ''], ['in', '几何数据', G], ['in', '选中项', P]] },
    { x: 398, y: 758, w: 66, head: 'purple', title: '缩放', rows: [['out', '矢量', V], ['sel', '缩放', ''], ['in', '矢量', V], ['val', '缩放', '-0.050']] },
    { x: 540, y: 710, w: 65, head: 'teal', title: '设置位置', time: '<0.1ms', rows: [['out', '几何数据', G], ['in', '几何数据', G], ['in', '选中项', P], ['in', '位置', V], ['in', '偏移量', V]] },
    { x: 639, y: 597, w: 66, head: 'plain', title: '组输入', rows: inputRows.slice(1) },
    { x: 783, y: 818, w: 66, head: 'teal', title: '翻转面', time: '<0.1ms', rows: [['out', '网格', G], ['in', '网格', G], ['in', '选中项', P]] },
    { x: 787, y: 902, w: 65, head: 'teal', title: '挤出网格', time: '<0.1ms', rows: [['out', '网格', G], ['out', '顶', P], ['out', '边', P], ['sel', '面', ''], ['in', '网格', G], ['in', '选中项', P], ['in', '偏移量', V], ['in', '偏移比例', W], ['in', '各面', P]] },
    { x: 629, y: 955, w: 65, head: 'plain', title: '组输入', rows: inputRows },
    { x: 903, y: 853, w: 66, head: 'teal', title: '合并几何', time: '<0.1ms', rows: [['out', '几何数据', G], ['in', '几何数据', G]] },
    { x: 1000, y: 826, w: 65, head: 'teal', title: '按距离合并', time: '<0.1ms', rows: [['out', '几何数据', G], ['sel', '全部', ''], ['in', '几何数据', G], ['in', '选中项', P], ['val', '距离', '0.001m']] },
    { x: 1139, y: 806, w: 67, head: 'plain', title: '组输入', rows: inputRows },
    { x: 1116, y: 604, w: 67, head: 'plain', title: '组输入', rows: [['out', '玻璃颜色', Y], ['out', '', K]] },
  ],
  links: [
    [236, 687, 259, 698, G], [352, 653, 397, 670, G], [352, 675, 397, 681, P], [463, 636, 479, 620, G],
    [463, 648, 540, 738, G], [337, 789, 397, 798, '#5a50a0'], [464, 774, 540, 770, '#5a50a0'],
    [605, 726, 631, 813, G], [631, 813, 783, 845, G], [631, 813, 787, 962, G], [849, 834, 903, 880, G],
    [852, 918, 903, 880, G], [969, 869, 1000, 864, G], [1065, 842, 1139, 832, G], [694, 993, 787, 995, W],
  ],
};

const shader = {
  x: 1, y: 621,
  frames: [],
  nodes: [
    { x: -20, y: 661, w: 61, head: 'crimson', title: '', outlined: true, rows: [['out', '颜色', Y], ['out', '矢量', V], ['out', '系数', W], ['out', 'Alpha', W], ['sel', '', ''], ['sel', '', '']] },
    { x: 86, y: 647, w: 120, head: 'shade', title: '玻璃 BSDF', rows: [['out', '', K], ['bar', '多重散射GGX', ''], ['in', '颜色', Y], ['val', '糙度', ''], ['val', '折射率(IOR)', ''], ['in', '法向', V]] },
  ],
  links: [[41, 690, 86, 714, '#d8d8c0']],
};

function drawTree(canvas, tree) {
  let html = '';
  tree.frames.forEach(f => {
    const foot = f.time ? `<div class="foot">${icon('stopwatch')}${f.time.replace('<', '&lt;')}</div>` : '';
    html += `<div class="frame" style="left:${f.x - tree.x}px;top:${f.y - tree.y}px;width:${f.w}px;height:${f.h}px">${f.title}${foot}</div>`;
  });
  tree.nodes.forEach(n => {
    html += `<div class="node${n.outlined ? ' outlined' : ''}" style="left:${n.x - tree.x}px;top:${n.y - tree.y}px;width:${n.w}px">`;
    if (n.time) html += `<div class="time">${icon('stopwatch')}${n.time.replace('<', '&lt;')}</div>`;
    html += `<div class="head ${n.head}">${n.title ? icon('down', 'chev') : ''}${n.title}</div>`;
    n.rows.forEach(([kind, text, extra]) => {
      if (kind === 'in' || kind === 'out') {
        html += `<div class="line ${kind}" style="--dot:${extra}">${text}</div>`;
      } else {
        const lead = kind === 'bar' && extra ? icon('tree') : '';
        const tail = kind === 'sel' ? icon('down', 'chev') : `<em>${extra}</em>`;
        html += `<div class="line ${kind}" style="--dot:${W}"><span>${lead}${text}${tail}</span></div>`;
      }
    });
    html += '</div>';
  });
  canvas.insertAdjacentHTML('beforeend', html);

  const svg = document.createElementNS(svgNS, 'svg');
  svg.setAttribute('class', 'wires');
  svg.setAttribute('width', 1346);
  svg.setAttribute('height', 404);
  svg.setAttribute('viewBox', `${tree.x} ${tree.y} 1346 404`);
  tree.links.forEach(([x1, y1, x2, y2, color]) => {
    const line = document.createElementNS(svgNS, 'path');
    line.setAttribute('d', `M${x1} ${y1}L${x2} ${y2}`);
    line.setAttribute('stroke', color);
    line.setAttribute('stroke-width', color === G ? 2 : 1);
    line.setAttribute('stroke-linecap', 'round');
    svg.appendChild(line);
    if (color !== G) return;
    // round joint at each end
    [[x1, y1], [x2, y2]].forEach(([x, y]) => {
      const dot = document.createElementNS(svgNS, 'circle');
      dot.setAttribute('cx', x);
      dot.setAttribute('cy', y);
      dot.setAttribute('r', 2);
      dot.setAttribute('fill', G);
      svg.appendChild(dot);
    });
  });
  canvas.appendChild(svg);
}

drawTree(document.getElementById('geoCanvas'), geo);
drawTree(document.getElementById('shaderCanvas'), shader);
```
